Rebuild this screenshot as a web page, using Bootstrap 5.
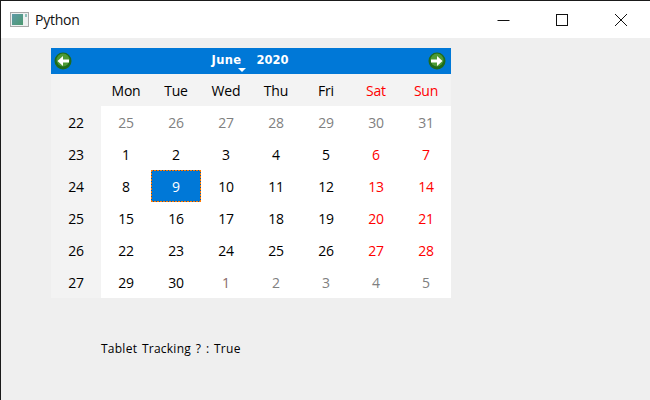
<!DOCTYPE html>
<html lang="en">
<head>
<meta charset="utf-8">
<title>Python</title>
<link href="https://cdn.jsdelivr.net/npm/bootstrap@5.3.0/dist/css/bootstrap.min.css" rel="stylesheet">
<style>
html,body{width:650px;height:400px;overflow:hidden;margin:0;background:#efefef;}
body{font-family:"Open Sans","Noto Sans",sans-serif;color:#000;}
.win{width:650px;height:400px;border-top:1px solid #1a1a1a;border-left:1px solid #1a1a1a;background:#efefef;}
.tbar{height:37px;background:#fff;}
.ticon{margin-left:9px;width:20px;height:16px;}
.ttl{margin-left:5px;font-size:14px;line-height:20px;color:#111;letter-spacing:-.25px;}
.wbtn{width:59px;height:37px;}
.wrap{padding:10px 0 0 50px;}
.cal{width:400px;}
.calnav{height:26px;background:#0078d7;color:#fff;padding:0 5px 0 3px;font-family:"DejaVu Sans",sans-serif;font-size:11.5px;font-weight:700;}
.mth{position:relative;margin-right:15px;letter-spacing:.4px;}
.caret{position:absolute;right:-4px;bottom:-2px;width:0;height:0;border-left:4px solid transparent;border-right:4px solid transparent;border-top:4px solid #fff;}
.cgrid{display:grid;grid-template-columns:repeat(8,50px);grid-template-rows:32px repeat(6,32px);font-size:14px;}
.cgrid>div{display:flex;align-items:center;justify-content:center;background:#fff;letter-spacing:-.2px;}
.cgrid>.hd{background:#f3f3f3;}
.cgrid>.dim{color:#808080;}
.cgrid>.dimr{color:#8a6a6a;}
.cgrid>.wk{color:#f00;}
.cgrid>.sel{color:#fff;background-color:#0078d7;
  background-image:repeating-linear-gradient(90deg,#ff7a00 0 2px,#0a5aa0 2px 3px),repeating-linear-gradient(90deg,#ff7a00 0 2px,#0a5aa0 2px 3px),repeating-linear-gradient(0deg,#ff7a00 0 2px,#0a5aa0 2px 3px),repeating-linear-gradient(0deg,#ff7a00 0 2px,#0a5aa0 2px 3px);
  background-size:100% 1px,100% 1px,1px 100%,1px 100%;background-position:0 0,0 100%,0 0,100% 0;background-repeat:no-repeat;}
.note{margin:43px 0 0 50px;font-size:12px;line-height:16px;color:#000;letter-spacing:.25px;word-spacing:1.35px;}
</style>
</head>
<body>
<div class="win">
  <div class="tbar d-flex align-items-center">
    <svg class="ticon" viewBox="0 0 20 16"><defs><linearGradient id="tg" x1="0" y1="0" x2="1" y2="1"><stop offset="0" stop-color="#5f9aa8"/><stop offset="1" stop-color="#4d9a70"/></linearGradient></defs><rect x=".5" y=".5" width="18" height="14" fill="#eef1f1" stroke="#a9a9a9"/><rect x="2" y="2" width="11" height="11" fill="url(#tg)"/><rect x="15" y="2" width="2" height="3" fill="#8fc0bb"/></svg>
    <span class="ttl">Python</span>
    <div class="ms-auto d-flex">
      <div class="wbtn d-flex align-items-center justify-content-center"><svg width="14" height="14" viewBox="0 0 14 14"><path d="M1.500 7.500H13.500" stroke="#111" fill="none"/></svg></div>
      <div class="wbtn d-flex align-items-center justify-content-center"><svg width="14" height="14" viewBox="0 0 14 14"><rect x="1.500" y="1.500" width="11" height="11" stroke="#111" fill="none"/></svg></div>
      <div class="wbtn d-flex align-items-center justify-content-center"><svg width="14" height="14" viewBox="0 0 14 14"><path d="M1 1L13 13M13 1L1 13" stroke="#111" fill="none"/></svg></div>
    </div>
  </div>
  <div class="wrap">
    <div class="cal">
      <div class="calnav d-flex align-items-center">
        <svg width="18" height="18" viewBox="0 0 18 18"><circle cx="9" cy="9" r="8.500" fill="#1f6b1a"/><circle cx="9" cy="8" r="6.500" fill="#4c9a36"/><path d="M15 7.500H9V4L3.500 9L9 14V10.500H15Z" fill="#fff"/></svg>
        <div class="flex-grow-1 d-flex justify-content-center"><span class="mth">June<span class="caret"></span></span><span>2020</span></div>
        <svg width="18" height="18" viewBox="0 0 18 18"><circle cx="9" cy="9" r="8.500" fill="#1f6b1a"/><circle cx="9" cy="8" r="6.500" fill="#4c9a36"/><path d="M3 7.500H9V4L14.500 9L9 14V10.500H3Z" fill="#fff"/></svg>
      </div>
      <div class="cgrid">
        <div class="hd"></div><div class="hd">Mon</div><div class="hd">Tue</div><div class="hd">Wed</div><div class="hd">Thu</div><div class="hd">Fri</div><div class="hd wk">Sat</div><div class="hd wk">Sun</div>
        <div class="hd">22</div><div class="dim">25</div><div class="dim">26</div><div class="dim">27</div><div class="dim">28</div><div class="dim">29</div><div class="dim">30</div><div class="dim">31</div>
        <div class="hd">23</div><div>1</div><div>2</div><div>3</div><div>4</div><div>5</div><div class="wk">6</div><div class="wk">7</div>
        <div class="hd">24</div><div>8</div><div class="sel">9</div><div>10</div><div>11</div><div>12</div><div class="wk">13</div><div class="wk">14</div>
        <div class="hd">25</div><div>15</div><div>16</div><div>17</div><div>18</div><div>19</div><div class="wk">20</div><div class="wk">21</div>
        <div class="hd">26</div><div>22</div><div>23</div><div>24</div><div>25</div><div>26</div><div class="wk">27</div><div class="wk">28</div>
        <div class="hd">27</div><div>29</div><div>30</div><div class="dimr">1</div><div class="dim">2</div><div class="dim">3</div><div class="dim">4</div><div class="dim">5</div>
      </div>
    </div>
    <div class="note">Tablet Tracking ? : True</div>
  </div>
</div>
<script src="https://cdn.jsdelivr.net/npm/bootstrap@5.3.0/dist/js/bootstrap.bundle.min.js"></script>
</body>
</html>
